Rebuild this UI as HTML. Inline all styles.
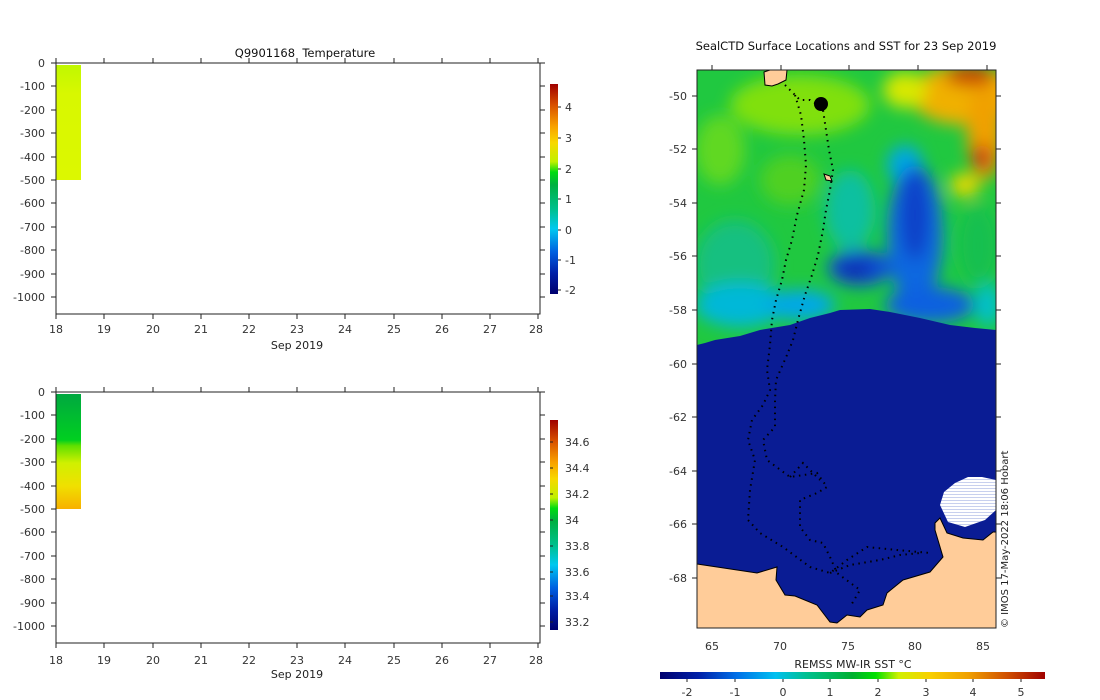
<!DOCTYPE html>
<html><head><meta charset="utf-8"><style>
html,body{margin:0;padding:0;background:#fff;width:1100px;height:700px;overflow:hidden}
svg{display:block}
text{font-family:"DejaVu Sans","Liberation Sans",sans-serif;font-size:11px;fill:#333}
</style></head><body>
<svg width="1100" height="700" viewBox="0 0 1100 700" xmlns="http://www.w3.org/2000/svg">
<defs>
<linearGradient id="cbT" x1="0" y1="1" x2="0" y2="0">
<stop offset="0" stop-color="#00006e"/><stop offset="0.1" stop-color="#0020a8"/>
<stop offset="0.2" stop-color="#0060e0"/><stop offset="0.31" stop-color="#00c8f0"/>
<stop offset="0.4" stop-color="#00c090"/><stop offset="0.52" stop-color="#00b040"/>
<stop offset="0.58" stop-color="#00dc10"/><stop offset="0.63" stop-color="#c0f000"/>
<stop offset="0.72" stop-color="#f8d800"/><stop offset="0.8" stop-color="#f8a000"/>
<stop offset="0.9" stop-color="#d85000"/><stop offset="1" stop-color="#a00000"/>
</linearGradient>
<linearGradient id="cbH" x1="0" y1="0" x2="1" y2="0">
<stop offset="0" stop-color="#00006e"/><stop offset="0.1" stop-color="#0020a8"/>
<stop offset="0.2" stop-color="#0070e8"/><stop offset="0.3" stop-color="#00c0f0"/>
<stop offset="0.38" stop-color="#00c090"/><stop offset="0.5" stop-color="#00b030"/>
<stop offset="0.56" stop-color="#00e000"/><stop offset="0.62" stop-color="#d0f000"/>
<stop offset="0.7" stop-color="#f8d000"/><stop offset="0.8" stop-color="#f0a000"/>
<stop offset="0.9" stop-color="#d05000"/><stop offset="1" stop-color="#a00000"/>
</linearGradient>
<linearGradient id="sal" x1="0" y1="0" x2="0" y2="1">
<stop offset="0" stop-color="#00a840"/><stop offset="0.4" stop-color="#00d020"/>
<stop offset="0.45" stop-color="#60e000"/><stop offset="0.6" stop-color="#d0f000"/>
<stop offset="0.8" stop-color="#f0e000"/><stop offset="1" stop-color="#f8b000"/>
</linearGradient>
<linearGradient id="tmp" x1="0" y1="0" x2="0" y2="1">
<stop offset="0" stop-color="#c0f800"/><stop offset="0.25" stop-color="#d8f800"/><stop offset="1" stop-color="#dcf800"/>
</linearGradient>
<pattern id="ice" width="4" height="3" patternUnits="userSpaceOnUse"><rect width="4" height="3" fill="#fff"/><rect y="2" width="4" height="1" fill="#c8d0ee"/></pattern>
<filter id="bl" x="-20%" y="-20%" width="140%" height="140%"><feGaussianBlur stdDeviation="8"/></filter>
<clipPath id="mc"><rect x="697" y="70" width="299" height="558"/></clipPath>
</defs>

<!-- Top plot -->
<text x="305" y="57" text-anchor="middle" style="font-size:11.5px;fill:#111">Q9901168&#160; Temperature</text>
<rect x="56" y="65" width="25" height="115" fill="url(#tmp)"/>
<rect x="56" y="63" width="484" height="251" fill="none" stroke="#222" stroke-width="1"/>
<g stroke="#222">
<path d="M56 63v-5M104 63v-5M153 63v-5M201 63v-5M249 63v-5M297 63v-5M345 63v-5M394 63v-5M442 63v-5M490 63v-5M538 63v-5"/>
<path d="M56 314v5M104 314v5M153 314v5M201 314v5M249 314v5M297 314v5M345 314v5M394 314v5M442 314v5M490 314v5M538 314v5"/>
<path d="M51 63h5M51 86h5M51 110h5M51 133h5M51 157h5M51 180h5M51 203h5M51 227h5M51 250h5M51 274h5M51 297h5"/>
<path d="M540 63h5M540 86h5M540 110h5M540 133h5M540 157h5M540 180h5M540 203h5M540 227h5M540 250h5M540 274h5M540 297h5"/>
</g>
<g text-anchor="end">
<text x="45" y="67">0</text><text x="45" y="90">-100</text><text x="45" y="114">-200</text><text x="45" y="137">-300</text><text x="45" y="161">-400</text><text x="45" y="184">-500</text><text x="45" y="207">-600</text><text x="45" y="231">-700</text><text x="45" y="254">-800</text><text x="45" y="278">-900</text><text x="45" y="301">-1000</text>
</g>
<g text-anchor="middle">
<text x="56" y="333">18</text><text x="104" y="333">19</text><text x="153" y="333">20</text><text x="201" y="333">21</text><text x="249" y="333">22</text><text x="297" y="333">23</text><text x="345" y="333">24</text><text x="394" y="333">25</text><text x="442" y="333">26</text><text x="490" y="333">27</text><text x="536" y="333">28</text>
<text x="297" y="349" style="fill:#222">Sep 2019</text>
</g>
<rect x="550" y="84" width="8" height="210" fill="url(#cbT)"/>
<g stroke="#222"><path d="M558 107h3M558 138h3M558 169h3M558 199h3M558 230h3M558 260h3M558 290h3"/></g>
<g><text x="565" y="111">4</text><text x="565" y="142">3</text><text x="565" y="173">2</text><text x="565" y="203">1</text><text x="565" y="234">0</text><text x="565" y="264">-1</text><text x="565" y="294">-2</text></g>

<!-- Bottom plot -->
<rect x="56" y="394" width="25" height="115" fill="url(#sal)"/>
<rect x="56" y="392" width="484" height="251" fill="none" stroke="#222" stroke-width="1"/>
<g stroke="#222">
<path d="M56 392v-5M104 392v-5M153 392v-5M201 392v-5M249 392v-5M297 392v-5M345 392v-5M394 392v-5M442 392v-5M490 392v-5M538 392v-5"/>
<path d="M56 643v5M104 643v5M153 643v5M201 643v5M249 643v5M297 643v5M345 643v5M394 643v5M442 643v5M490 643v5M538 643v5"/>
<path d="M51 392h5M51 415h5M51 439h5M51 462h5M51 486h5M51 509h5M51 532h5M51 556h5M51 579h5M51 603h5M51 626h5"/>
<path d="M540 392h5M540 415h5M540 439h5M540 462h5M540 486h5M540 509h5M540 532h5M540 556h5M540 579h5M540 603h5M540 626h5"/>
</g>
<g text-anchor="end">
<text x="45" y="396">0</text><text x="45" y="419">-100</text><text x="45" y="443">-200</text><text x="45" y="466">-300</text><text x="45" y="490">-400</text><text x="45" y="513">-500</text><text x="45" y="536">-600</text><text x="45" y="560">-700</text><text x="45" y="583">-800</text><text x="45" y="607">-900</text><text x="45" y="630">-1000</text>
</g>
<g text-anchor="middle">
<text x="56" y="664">18</text><text x="104" y="664">19</text><text x="153" y="664">20</text><text x="201" y="664">21</text><text x="249" y="664">22</text><text x="297" y="664">23</text><text x="345" y="664">24</text><text x="394" y="664">25</text><text x="442" y="664">26</text><text x="490" y="664">27</text><text x="536" y="664">28</text>
<text x="297" y="678" style="fill:#222">Sep 2019</text>
</g>
<rect x="550" y="420" width="8" height="210" fill="url(#cbT)"/>
<g stroke="#222"><path d="M550 442h3M550 468h3M550 494h3M550 520h3M550 546h3M550 572h3M550 596h3M550 622h3"/></g>
<g><text x="565" y="446">34.6</text><text x="565" y="472">34.4</text><text x="565" y="498">34.2</text><text x="565" y="524">34</text><text x="565" y="550">33.8</text><text x="565" y="576">33.6</text><text x="565" y="600">33.4</text><text x="565" y="626">33.2</text></g>

<!-- Map -->
<text x="846" y="50" text-anchor="middle" style="font-size:11.5px;fill:#111">SealCTD Surface Locations and SST for 23 Sep 2019</text>
<g clip-path="url(#mc)">
<rect x="697" y="70" width="299" height="558" fill="#20c840"/>
<g filter="url(#bl)">
<ellipse cx="800" cy="105" rx="70" ry="30" fill="#80e010"/>
<ellipse cx="720" cy="150" rx="25" ry="35" fill="#60d820"/>
<ellipse cx="790" cy="180" rx="30" ry="25" fill="#50d020"/>
<ellipse cx="735" cy="265" rx="40" ry="45" fill="#14c080"/>
<ellipse cx="850" cy="210" rx="25" ry="40" fill="#10c0a0"/>
<ellipse cx="740" cy="305" rx="45" ry="22" fill="#00b8d8"/>
<ellipse cx="905" cy="165" rx="18" ry="20" fill="#00a8e0"/>
<ellipse cx="915" cy="235" rx="28" ry="70" fill="#1068e0"/>
<ellipse cx="915" cy="215" rx="14" ry="45" fill="#1040c8"/>
<ellipse cx="860" cy="268" rx="32" ry="18" fill="#1050d8"/>
<ellipse cx="855" cy="270" rx="18" ry="10" fill="#1030b0"/>
<ellipse cx="800" cy="305" rx="35" ry="15" fill="#00a8e8"/>
<ellipse cx="930" cy="305" rx="45" ry="18" fill="#1060e0"/>
<ellipse cx="978" cy="245" rx="20" ry="40" fill="#18c050"/>
<ellipse cx="988" cy="305" rx="12" ry="22" fill="#00c0d0"/>
<ellipse cx="965" cy="95" rx="55" ry="30" fill="#f0b000"/>
<ellipse cx="985" cy="130" rx="18" ry="50" fill="#f0a000"/>
<ellipse cx="982" cy="158" rx="10" ry="14" fill="#c83810"/>
<ellipse cx="970" cy="76" rx="25" ry="10" fill="#c84000"/>
<ellipse cx="905" cy="90" rx="22" ry="18" fill="#d8e800"/>
<ellipse cx="965" cy="185" rx="15" ry="12" fill="#e8d800"/>
</g>
<path d="M697 345L705 343L715 340L740 336L760 330L790 325L810 318L830 313L840 310L870 309L890 312L920 318L950 325L975 328L996 330L996 628L697 628Z" fill="#0a1c94"/>
<path d="M697 564L757 573L777 567L776 580L785 595L795 596L817 605L830 622L837 623L847 615L860 617L867 610L883 605L887 593L903 580L930 572L943 557L935 530L935 523L940 518L947 533L963 538L983 540L993 532L997 532L997 628L697 628Z" fill="#ffcc99" stroke="#000" stroke-width="1"/>
<path d="M940 505L944 492L955 483L968 477L982 477L996 480L996 510L985 520L965 527L948 522Z" fill="url(#ice)"/>
<path d="M764 72L770 70L787 70L786 80L778 84L772 86L765 85Z" fill="#ffcc99" stroke="#000" stroke-width="1"/>
<path d="M824 174L830 176L832 181L826 180Z" fill="#ffcc99" stroke="#000" stroke-width="1"/>
<circle cx="821" cy="104" r="7" fill="#000"/>
<g fill="none" stroke="#000" stroke-width="2" stroke-dasharray="1.5 4.5">
<polyline points="785,85 795,95 800,100 810,100 815,103 823,110 826,130 829,150 833,170 830,190 826,210 823,230 818,255 812,275 805,295 798,320 793,340 787,355"/>
<polyline points="795,95 801,115 804,140 806,165 804,190 797,215 792,240 786,260 782,280 776,300 772,320 770,345 767,370 770,390 763,405 752,420 748,440 755,460 750,490 748,520 760,533 783,547 810,567 830,573 847,560 867,547 897,550 930,553"/>
<polyline points="787,355 776,380 775,400 775,427 763,440 767,460 790,477 817,473 827,487 817,493 800,500 800,527 810,540 823,543 830,557 837,573 860,590 850,607"/>
<polyline points="790,477 803,463 815,475 820,480"/>
<polyline points="830,573 850,565 880,560 900,555 920,553"/>
</g>
</g>
<rect x="697" y="70" width="299" height="558" fill="none" stroke="#222" stroke-width="1"/>
<g stroke="#222">
<path d="M712 70v-5M781 70v-5M849 70v-5M918 70v-5M987 70v-5"/>
<path d="M697 96h-5M697 149h-5M697 203h-5M697 256h-5M697 310h-5M697 364h-5M697 417h-5M697 471h-5M697 524h-5M697 578h-5"/>
<path d="M996 96h5M996 149h5M996 203h5M996 256h5M996 310h5M996 364h5M996 417h5M996 471h5M996 524h5M996 578h5"/>
</g>
<g text-anchor="end">
<text x="687" y="100">-50</text><text x="687" y="153">-52</text><text x="687" y="207">-54</text><text x="687" y="260">-56</text><text x="687" y="314">-58</text><text x="687" y="368">-60</text><text x="687" y="421">-62</text><text x="687" y="475">-64</text><text x="687" y="528">-66</text><text x="687" y="582">-68</text>
</g>
<g text-anchor="middle">
<text x="712" y="650">65</text><text x="780" y="650">70</text><text x="848" y="650">75</text><text x="915" y="650">80</text><text x="983" y="650">85</text>
<text x="853" y="668" style="fill:#222">REMSS MW-IR SST °C</text>
</g>
<text transform="translate(1008,628) rotate(-90)" style="font-size:10px;fill:#222">© IMOS 17-May-2022 18:06 Hobart</text>
<rect x="660" y="672" width="385" height="7" fill="url(#cbH)"/>
<g stroke="#222"><path d="M687 679v3M735 679v3M783 679v3M830 679v3M878 679v3M926 679v3M973 679v3M1021 679v3"/></g>
<g text-anchor="middle">
<text x="687" y="696">-2</text><text x="735" y="696">-1</text><text x="783" y="696">0</text><text x="830" y="696">1</text><text x="878" y="696">2</text><text x="926" y="696">3</text><text x="973" y="696">4</text><text x="1021" y="696">5</text>
</g>
</svg>
</body></html>
